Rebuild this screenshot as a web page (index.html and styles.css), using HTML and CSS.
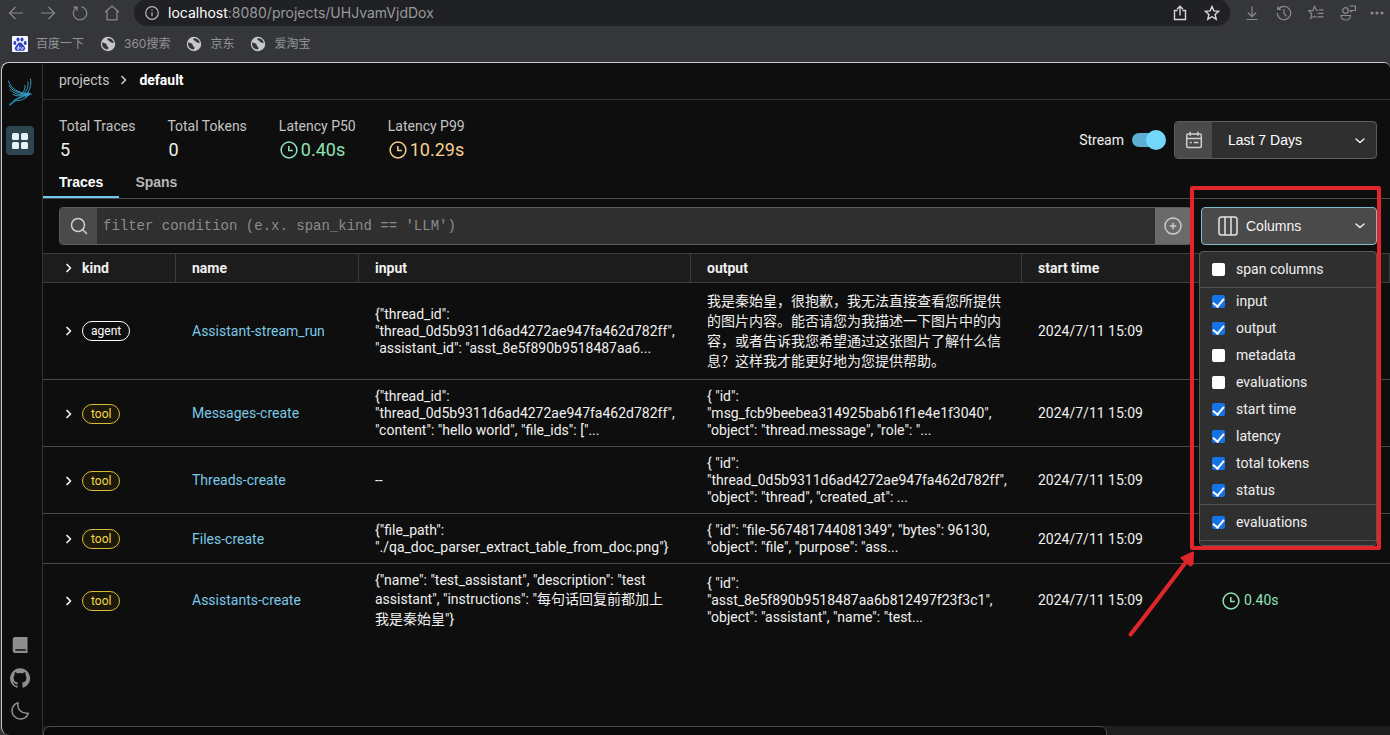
FILE: index.html
```html
<!DOCTYPE html>
<html lang="en">
<head>
<meta charset="utf-8">
<title>default - projects</title>
<link rel="stylesheet" href="styles.css">
</head>
<body>
<svg class="defs" aria-hidden="true">
  <symbol id="chev-right" viewBox="0 0 8 12"><path d="M2 2.500l3.500 3.500-3.500 3.500" fill="none" stroke="currentColor" stroke-width="1.700" stroke-linecap="round" stroke-linejoin="round"/></symbol>
  <symbol id="chev-down" viewBox="0 0 12 8"><path d="M2 2l4 3.600 4-3.600" fill="none" stroke="currentColor" stroke-width="1.400" stroke-linecap="round" stroke-linejoin="round"/></symbol>
  <symbol id="clock" viewBox="0 0 18 18"><circle cx="9" cy="9" r="7.900" fill="none" stroke="currentColor" stroke-width="1.500"/><path d="M8.800 5v4.600h4" fill="none" stroke="currentColor" stroke-width="1.500"/></symbol>
  <symbol id="globe" viewBox="0 0 16 16"><circle cx="8" cy="8" r="7.200" fill="#c6c7ca"/><path d="M2.500 6.200c1.600 1.200 3.200.6 4 2 .6 1-.2 1.500.9 2.100 1 .6 1.300 1.700.6 3.100-3 .2-5.700-2-6-5.200zM8 2.200c-1.200.9-.8 2 .5 2.200 1.500.2.9 1.700 2.300 1.800 1.200.1 1.400.900 3 .9C13.400 4.200 10.900 2.200 8 2.200z" fill="#35363a"/></symbol>
</svg>

<header class="chrome">
  <div class="toolbar">
    <button class="tool" aria-label="Back"><svg width="16" height="16" viewBox="0 0 16 16"><path d="M15 8H2M7.500 2L1.500 8l6 6"/></svg></button>
    <button class="tool" aria-label="Forward"><svg width="16" height="16" viewBox="0 0 16 16"><path d="M1 8h13M8.500 2l6 6-6 6"/></svg></button>
    <button class="tool" aria-label="Reload"><svg width="16" height="16" viewBox="0 0 16 16"><path d="M4.200 2.600A6.700 6.700 0 1 0 9.500 1.600M1.500 2.200h3.500v3.500"/></svg></button>
    <button class="tool" aria-label="Home"><svg width="16" height="16" viewBox="0 0 16 16"><path d="M1 7.200L8 1l7 6.200M3 6v8.800h10V6"/></svg></button>
    <div class="address">
      <svg width="16" height="16" viewBox="0 0 16 16" class="info"><circle cx="8" cy="8" r="6.300"/><path d="M8 7.200v4M8 4.500v1.300"/></svg>
      <span class="url"><b>localhost</b>:8080/projects/UHJvamVjdDox</span>
      <button class="tool bright" aria-label="Share"><svg width="16" height="16" viewBox="0 0 16 16"><path d="M5.500 5.500h-3v9h11v-9h-3M8 10.500V1.500M5 4.200L8 1.300l3 2.900"/></svg></button>
      <button class="tool bright" aria-label="Bookmark"><svg width="16" height="16" viewBox="0 0 16 16"><path d="M8 1.500l1.900 4.400 4.800.4-3.600 3.200 1.100 4.700L8 11.700l-4.200 2.500 1.100-4.700L1.300 6.300l4.800-.4z"/></svg></button>
    </div>
    <button class="tool" aria-label="Downloads"><svg width="16" height="16" viewBox="0 0 16 16"><path d="M8 1.500v10M3.800 7.500L8 11.700l4.200-4.200M2.500 14.500h11"/></svg></button>
    <button class="tool" aria-label="History"><svg width="16" height="16" viewBox="0 0 16 16"><path d="M2.500 4.200A6.700 6.700 0 1 1 1.300 8M1.800 1.300v3.200H5M8 4.200v4l2.500 3.200"/></svg></button>
    <button class="tool" aria-label="Favorites"><svg width="16" height="16" viewBox="0 0 16 16"><path d="M10 5.500L8.500 5.300 6.500 1.500 4.900 5.400l-4.200.4 3 3-.9 4.500 3.700-2.200 2 1.200M11 4.800h4.500M9.500 8.300h6M9.500 11.800h6"/></svg></button>
    <button class="tool" aria-label="Profile"><svg width="18" height="16" viewBox="0 0 18 16"><circle cx="6.500" cy="5.500" r="2.800"/><path d="M2 10.500h9.500c0 6-9.500 6-9.500 0zM10.500 1h6v4.500h-3l-1.500 1.300V5.500h-1.500"/></svg></button>
    <button class="tool more" aria-label="More"><svg width="16" height="16" viewBox="0 0 16 16"><circle cx="3" cy="8" r="1" /><circle cx="8" cy="8" r="1"/><circle cx="13" cy="8" r="1"/></svg></button>
  </div>
  <nav class="bookmarks">
    <a href="#"><svg width="16" height="16" viewBox="0 0 16 16"><rect width="16" height="16" rx="1" fill="#f4f5fc"/><g fill="#2f3cc4"><ellipse cx="2.900" cy="7" rx="1.500" ry="2"/><ellipse cx="6" cy="3.500" rx="1.500" ry="2.100"/><ellipse cx="10" cy="3.500" rx="1.500" ry="2.100"/><ellipse cx="13.200" cy="7" rx="1.500" ry="2"/><path d="M8 6.500c2 0 2.500 2 4 3.500 2.200 2.200 1 5-1.500 4.800H5.500C3 15 1.800 12.200 4 10c1.500-1.500 2-3.500 4-3.500z"/></g><path d="M6.800 9.500v4M6.800 11.200c-2.200-.5-2.200 2.300 0 2.300M8.800 11v1.500c0 1.300 2.200 1.300 2.200 0V11" fill="none" stroke="#fff" stroke-width=".9"/></svg>百度一下</a>
    <a href="#"><svg width="16" height="16"><use href="#globe"/></svg>360搜索</a>
    <a href="#"><svg width="16" height="16"><use href="#globe"/></svg>京东</a>
    <a href="#"><svg width="16" height="16"><use href="#globe"/></svg>爱淘宝</a>
  </nav>
</header>

<div class="window">
  <aside class="sidebar">
    <svg class="logo" width="28" height="30" viewBox="0 0 28 30" fill="none" stroke-linecap="round">
      <g stroke="#3a9dc2" stroke-width="1"><path d="M2.500 4c2 7 8 11 18.500 13"/><path d="M3 8.500c3 5 8 7.500 16 8.500"/><path d="M4 12.500c4 4 8 5.500 13 5"/><path d="M7 17.500c3 1.500 6 2 10 .5"/><path d="M24.500 2c1 5 0 10-3.500 14.500"/><path d="M22 5c.5 4-.5 8-3.500 11"/><path d="M19 8.500c.5 3-.5 5-2.500 7.500"/></g>
      <g stroke="#2489b0" stroke-width="1.200"><path d="M18 18.500C12 20 9 23 4 28"/><path d="M22 18c-3 5-7 5.500-11 5.500-2.500.5-4.500 1.500-7 4"/><path d="M19 18.500c-4 3-8 2.500-11 5"/></g>
      <path d="M27 17.500l-4-2c-3-.3-5 1.500-6.500 3 3 2 6 1.200 7.500-1z" fill="#2c9bc4"/>
    </svg>
    <a class="nav-active" href="#" aria-label="Projects"><svg width="16" height="16" viewBox="0 0 16 16" fill="#e6f2f8"><rect width="7" height="7" rx="1.500"/><rect x="9" width="7" height="7" rx="1.500"/><rect y="9" width="7" height="7" rx="1.500"/><rect x="9" y="9" width="7" height="7" rx="1.500"/></svg></a>
    <div class="side-links">
      <a href="#" aria-label="Documentation"><svg width="20" height="20" viewBox="0 0 20 20"><path d="M5 2h12.500v16H5a2.300 2.300 0 0 1-2.300-2.300V4.300A2.300 2.300 0 0 1 5 2z" fill="currentColor"/><path d="M5.300 15h10.500" stroke="#0e0e0e" stroke-width="1.600"/></svg></a>
      <a href="#" aria-label="GitHub"><svg width="20" height="20" viewBox="0 0 16 16" fill="currentColor"><path d="M8 .2a8 8 0 0 0-2.530 15.590c.4.070.55-.17.550-.38v-1.490c-2.010.37-2.530-.49-2.690-.94-.09-.23-.48-.94-.82-1.130-.28-.15-.68-.52-.01-.53.63-.01 1.080.58 1.230.82.72 1.210 1.870.87 2.330.66.070-.52.280-.87.510-1.070-1.780-.2-3.640-.89-3.640-3.950 0-.87.310-1.590.82-2.150-.08-.2-.36-1.020.08-2.120 0 0 .67-.21 2.200.82a7.600 7.600 0 0 1 4 0c1.530-1.040 2.200-.82 2.200-.82.44 1.100.16 1.920.08 2.120.51.560.82 1.270.82 2.150 0 3.070-1.870 3.750-3.650 3.950.29.250.54.730.54 1.480v2.200c0 .21.15.46.55.38A8 8 0 0 0 8 .2z"/></svg></a>
      <a href="#" aria-label="Dark mode"><svg width="20" height="20" viewBox="0 0 20 20"><path d="M8 1.800C7 8.500 11.500 13 18.300 12.200A8.300 8.300 0 1 1 8 1.800z" fill="none" stroke="currentColor" stroke-width="1.500" stroke-linejoin="round"/></svg></a>
    </div>
  </aside>

  <main class="main">
    <nav class="crumbs"><a href="#">projects</a><svg width="8" height="12"><use href="#chev-right"/></svg><strong>default</strong></nav>

    <section class="summary">
      <div class="stat"><span>Total Traces</span><b>5</b></div>
      <div class="stat"><span>Total Tokens</span><b>0</b></div>
      <div class="stat"><span>Latency P50</span><b class="ok"><svg width="18" height="18"><use href="#clock"/></svg>0.40s</b></div>
      <div class="stat"><span>Latency P99</span><b class="warn"><svg width="18" height="18"><use href="#clock"/></svg>10.29s</b></div>
      <div class="controls">
        <label class="stream">Stream<input type="checkbox" role="switch" checked></label>
        <div class="range">
          <span class="range-icon"><svg width="18" height="18" viewBox="0 0 18 18" fill="none" stroke="#cfcfcf" stroke-width="1.500"><rect x="1.700" y="3" width="14.600" height="13.500" rx="1.500"/><path d="M1.700 7.500h14.600M5.200.8v4M12.800.8v4M4.800 11.500h2M9 11.500h4.500"/></svg></span>
          <select aria-label="Time range"><option>Last 7 Days</option></select>
          <svg class="caret" width="12" height="8"><use href="#chev-down"/></svg>
        </div>
      </div>
    </section>

    <div class="tabs" role="tablist">
      <button role="tab" aria-selected="true">Traces</button>
      <button role="tab" aria-selected="false">Spans</button>
    </div>

    <div class="filters">
      <div class="search">
        <span class="search-icon"><svg width="18" height="18" viewBox="0 0 18 18" fill="none" stroke="#cfcfcf" stroke-width="1.500" stroke-linecap="round"><circle cx="8" cy="8" r="6.500"/><path d="M12.800 12.800l3.700 3.700"/></svg></span>
        <input type="text" aria-label="Filter condition" placeholder="filter condition (e.x. span_kind == 'LLM')">
        <button class="add" aria-label="Add filter"><svg width="18" height="18" viewBox="0 0 18 18" fill="none" stroke="#cfcfcf" stroke-width="1.400"><circle cx="9" cy="9" r="8"/><path d="M9 5.800v6.400M5.800 9h6.400"/></svg></button>
      </div>
      <div class="columns">
        <button class="columns-button" aria-expanded="true"><svg width="20" height="20" viewBox="0 0 20 20" fill="none" stroke="#e4e4e4" stroke-width="1.500"><rect x="1" y="1" width="18" height="18" rx="2.500"/><path d="M7 1v18M13 1v18"/></svg><span>Columns</span><svg width="12" height="8"><use href="#chev-down"/></svg></button>
        <div class="menu">
          <div class="group padded"><label><input type="checkbox">span columns</label></div>
          <div class="group">
            <label><input type="checkbox" checked>input</label>
            <label><input type="checkbox" checked>output</label>
            <label><input type="checkbox">metadata</label>
            <label><input type="checkbox">evaluations</label>
            <label><input type="checkbox" checked>start time</label>
            <label><input type="checkbox" checked>latency</label>
            <label><input type="checkbox" checked>total tokens</label>
            <label><input type="checkbox" checked>status</label>
          </div>
          <div class="group padded"><label><input type="checkbox" checked>evaluations</label></div>
        </div>
        <div class="highlight"></div>
        <svg class="arrow" width="70" height="90" viewBox="0 0 70 90"><path d="M5.500 84.500C25 60 45 33 64 8" stroke="#e0262b" stroke-width="4" stroke-linecap="round"/><path d="M68 2.500L56.500 8l9 7.500 2-1.500z" fill="#e0262b" stroke="#e0262b" stroke-width="2" stroke-linejoin="round"/></svg>
      </div>
    </div>

    <div class="table-wrap">
      <table>
        <colgroup><col class="c-kind"><col class="c-name"><col class="c-input"><col class="c-output"><col class="c-time"><col class="c-time"><col></colgroup>
        <thead><tr>
          <th><span class="kind"><svg width="8" height="12"><use href="#chev-right"/></svg>kind</span></th><th>name</th><th>input</th><th>output</th><th>start time</th><th></th><th></th>
        </tr></thead>
        <tbody>
          <tr class="roomy">
            <td><span class="kind"><svg width="8" height="12"><use href="#chev-right"/></svg><span class="badge agent">agent</span></span></td>
            <td><a href="#">Assistant-stream_run</a></td>
            <td>{"thread_id":<br>"thread_0d5b9311d6ad4272ae947fa462d782ff",<br>"assistant_id": "asst_8e5f890b9518487aa6...</td>
            <td class="cjk">我是秦始皇，很抱歉，我无法直接查看您所提供<br>的图片内容。能否请您为我描述一下图片中的内<br>容，或者告诉我您希望通过这张图片了解什么信<br>息？这样我才能更好地为您提供帮助。</td>
            <td>2024/7/11 15:09</td><td></td><td></td>
          </tr>
          <tr>
            <td><span class="kind"><svg width="8" height="12"><use href="#chev-right"/></svg><span class="badge">tool</span></span></td>
            <td><a href="#">Messages-create</a></td>
            <td>{"thread_id":<br>"thread_0d5b9311d6ad4272ae947fa462d782ff",<br>"content": "hello world", "file_ids": ["...</td>
            <td>{ "id":<br>"msg_fcb9beebea314925bab61f1e4e1f3040",<br>"object": "thread.message", "role": "...</td>
            <td>2024/7/11 15:09</td><td></td><td></td>
          </tr>
          <tr>
            <td><span class="kind"><svg width="8" height="12"><use href="#chev-right"/></svg><span class="badge">tool</span></span></td>
            <td><a href="#">Threads-create</a></td>
            <td>--</td>
            <td>{ "id":<br>"thread_0d5b9311d6ad4272ae947fa462d782ff",<br>"object": "thread", "created_at": ...</td>
            <td>2024/7/11 15:09</td><td></td><td></td>
          </tr>
          <tr>
            <td><span class="kind"><svg width="8" height="12"><use href="#chev-right"/></svg><span class="badge">tool</span></span></td>
            <td><a href="#">Files-create</a></td>
            <td>{"file_path":<br>"./qa_doc_parser_extract_table_from_doc.png"}</td>
            <td>{ "id": "file-567481744081349", "bytes": 96130,<br>"object": "file", "purpose": "ass...</td>
            <td>2024/7/11 15:09</td><td></td><td></td>
          </tr>
          <tr class="roomy">
            <td><span class="kind"><svg width="8" height="12"><use href="#chev-right"/></svg><span class="badge">tool</span></span></td>
            <td><a href="#">Assistants-create</a></td>
            <td>{"name": "test_assistant", "description": "test<br>assistant", "instructions": "<span class="cjk">每句话回复前都加上<br>我是秦始皇</span>"}</td>
            <td>{ "id":<br>"asst_8e5f890b9518487aa6b812497f23f3c1",<br>"object": "assistant", "name": "test...</td>
            <td>2024/7/11 15:09</td>
            <td><span class="latency ok"><svg width="18" height="18"><use href="#clock"/></svg>0.40s</span></td><td></td>
          </tr>
        </tbody>
      </table>
    </div>
    <div class="scroll-track"><div class="scroll-thumb"></div></div>
  </main>
</div>
</body>
</html>
```

FILE: styles.css
```css
* { box-sizing: border-box; }

body {
  margin: 0;
  height: 100vh;
  display: flex;
  flex-direction: column;
  overflow: hidden;
  background: #35363a;
  color: #f0f0f0;
  font: 14px/17px Roboto, "Noto Sans CJK SC", sans-serif;
}

button, input, select { font: inherit; color: inherit; margin: 0; padding: 0; border: 0; background: none; }
a { color: inherit; text-decoration: none; }
svg { flex: none; display: block; }
.defs { position: absolute; width: 0; height: 0; }

/* Browser bar */
.toolbar { display: flex; align-items: center; height: 26px; padding-bottom: 1px; }
.tool { width: 32px; height: 24px; flex: none; display: flex; align-items: center; justify-content: center; color: #8a8b8f; }
.tool svg, .info { fill: none; stroke: currentColor; stroke-width: 1.2; }
.tool.bright { color: #d6d7da; }
.tool.bright svg { stroke-width: 1.4; }
.tool.more { width: 26px; }
.tool.more svg { fill: currentColor; }
.address {
  flex: 1;
  display: flex;
  align-items: center;
  height: 27px;
  margin: 0 6px;
  padding: 0 2px 0 10px;
  border-radius: 14px;
  background: #202124;
  color: #b5b6b9;
}
.url { flex: 1; margin-left: 8px; font-family: Inter, sans-serif; font-size: 14px; color: #98999d; }
.url b { color: #fff; font-weight: 400; }
.bookmarks { display: flex; gap: 16px; height: 36px; padding-left: 12px; align-items: center; font: 12px/16px Inter, "Noto Sans CJK SC", sans-serif; color: #929397; }
.bookmarks a { display: flex; align-items: center; gap: 8px; }

/* Window */
.window {
  flex: 1;
  min-height: 0;
  display: flex;
  margin-left: 1px;
  border: 1px solid #c9c9d0;
  border-width: 1px 0 0 1px;
  border-radius: 8px 6px 0 8px;
  background: #0e0e0e;
  overflow: hidden;
}
.sidebar { width: 41px; flex: none; display: flex; flex-direction: column; padding: 14px 8px 14px 4px; border-right: 1px solid #323232; }
.nav-active { width: 28px; height: 29px; margin-top: 19px; display: grid; place-items: center; border-radius: 4px; background: #2c454f; }
.side-links { margin-top: auto; display: grid; gap: 13px; width: 28px; justify-items: center; color: #8e8e8e; }
.main { flex: 1; min-width: 0; display: flex; flex-direction: column; }
.crumbs { display: flex; align-items: center; gap: 11px; height: 37px; padding: 0 16px 2px; border-bottom: 1px solid #323232; color: #c4c4c4; }
.crumbs strong { color: #fff; }

.summary { display: flex; align-items: center; gap: 32px; padding: 18px 13px 5px 16px; }
.stat { display: grid; gap: 3px; color: #c4c4c4; }
.stat b { display: flex; align-items: center; gap: 3px; padding-left: 1px; font-size: 18px; line-height: 24px; font-weight: 400; color: #f0f0f0; }
.stat b.ok, .ok { color: #8fe3b6; }
.stat b.warn { color: #f8ce92; }
.controls { margin-left: auto; display: flex; align-items: center; gap: 8px; }
.stream { display: flex; align-items: center; gap: 8px; }
.stream input { appearance: none; display: flex; align-items: center; width: 34px; height: 20px; }
.stream input::before { content: ""; width: 28px; height: 14px; border-radius: 7px; background: #5bb0d3; }
.stream input::after { content: ""; width: 20px; height: 20px; margin-left: -14px; border-radius: 50%; background: #72d7fb; }
.range { position: relative; display: flex; width: 203px; height: 38px; border: 1px solid #5c5c5c; border-radius: 4px; background: #2f2f2f; overflow: hidden; }
.range-icon { width: 37px; display: grid; place-items: center; background: #4a4a4a; }
.range select { flex: 1; appearance: none; padding: 0 32px 0 16px; font-family: "Liberation Sans", Arial, sans-serif; color: #fff; }
.caret { position: absolute; right: 10px; top: 15px; }

.tabs { display: flex; height: 32px; border-bottom: 1px solid #4a4a4a; font: bold 14px/17px "Liberation Sans", Arial, sans-serif; }
.tabs button { padding: 2px 16px 0; border-bottom: 2px solid transparent; color: #b8b8b8; }
.tabs button[aria-selected="true"] { color: #fff; border-color: #72c9ec; }

.filters { display: flex; padding: 8px 13px 8px 16px; }
.search { flex: 1; display: flex; height: 38px; border: 1px solid #5c5c5c; border-radius: 4px; background: #2f2f2f; overflow: hidden; }
.search-icon { width: 37px; display: grid; place-items: center; background: #4a4a4a; }
.search input { flex: 1; min-width: 0; padding: 0 6px; font-family: "Liberation Mono", "Courier New", monospace; outline: none; }
.search input::placeholder { color: #8c8c8c; opacity: 1; }
.add { width: 36px; display: grid; place-items: center; background: #6a6a6a; }
.columns { position: relative; width: 176px; margin-left: 9px; }
.columns-button { display: flex; align-items: center; width: 100%; height: 38px; padding: 0 10px 0 16px; gap: 8px; border: 1px solid #7fb9d0; border-radius: 4px; background: #4a4a4a; font-family: "Liberation Sans", Arial, sans-serif; color: #f4f4f4; }
.columns-button span { flex: 1; text-align: left; }
.menu { position: absolute; z-index: 2; top: 44px; right: 0; width: 178px; padding-bottom: 4px; border: 1px solid #585858; border-radius: 4px; background: #2f2f2f; }
.group { border-bottom: 1px solid #525252; }
.group.padded { padding: 4px 0; }
.group label { display: flex; align-items: center; height: 27px; padding-left: 12px; gap: 11px; }
.group input { appearance: none; width: 13px; height: 13px; border-radius: 2px; background: #fff; }
.group input:checked { background: #1473e6; display: flex; justify-content: center; padding-top: 1px; }
.group input:checked::after { content: ""; width: 5px; height: 9px; border: solid #fff; border-width: 0 2px 2px 0; transform: rotate(40deg); }
.highlight { position: absolute; z-index: 3; top: -21px; left: -11px; right: -4px; height: 364px; border: 4px solid #e0262b; border-radius: 2px; pointer-events: none; }
.arrow { position: absolute; z-index: 3; top: 343px; left: -76px; fill: none; pointer-events: none; }

.table-wrap { flex: 1; min-height: 0; overflow: hidden; }
table { width: 100%; table-layout: fixed; border-collapse: separate; border-spacing: 0; }
.c-kind { width: 133px; }
.c-name { width: 183px; }
.c-input { width: 332px; }
.c-output { width: 331px; }
.c-time { width: 184px; }
th { height: 30px; padding: 0 16px; text-align: left; background: #1c1c1c; border: 1px solid #3c3c3c; border-width: 1px 1px 1px 0; }
th:last-child { padding: 0; border-right: 0; }
td { height: 50px; padding: 8px 0 7px 16px; border-bottom: 1px solid #484848; white-space: nowrap; vertical-align: middle; }
td:last-child { padding: 0; }
tr:last-child td { border-bottom: 0; }
.roomy td { padding-bottom: 8px; }
td a { color: #7cc8e6; }
.cjk { line-height: 20px; }
.kind { display: flex; align-items: center; gap: 9px; padding-left: 6px; }
.badge { height: 20px; padding: 0 8px; border: 1px solid #d8bc3c; border-radius: 10px; font-size: 12px; line-height: 18px; color: #f2d64b; background: #1c180a; }
.badge.agent { border-color: #fff; color: #fff; background: none; }
.latency { display: flex; align-items: center; gap: 4px; }

.scroll-track { height: 9px; background: #1e1e1e; }
.scroll-thumb { width: 79%; height: 12px; border: 1px solid #4a4a4a; border-radius: 7px 6px 0 0; background: #0a0a0a; }
```
